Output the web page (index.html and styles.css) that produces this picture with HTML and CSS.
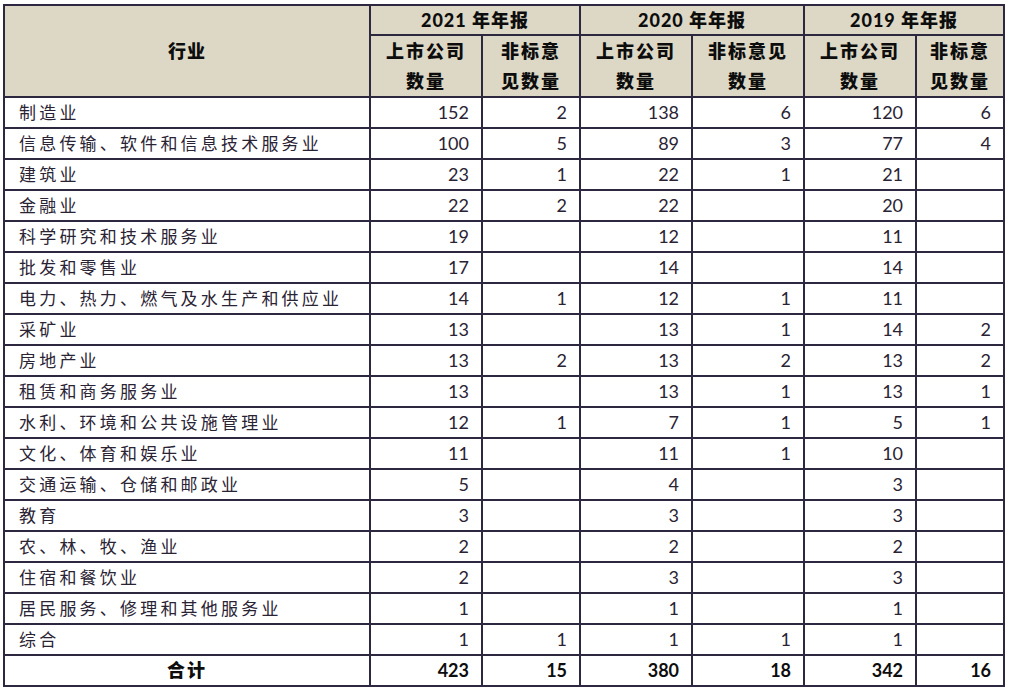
FILE: index.html
```html
<!DOCTYPE html>
<html lang="zh-CN">
<head>
<meta charset="utf-8">
<title>非标意见行业分布</title>
<link rel="stylesheet" href="styles.css">
</head>
<body>
<table class="report">
  <colgroup>
    <col class="c-ind"><col class="c-a"><col class="c-b"><col class="c-a"><col class="c-a"><col class="c-a"><col class="c-c">
  </colgroup>
  <thead>
    <tr class="h1">
      <th rowspan="2" class="ind-h">行业</th>
      <th colspan="2">2021 年年报</th>
      <th colspan="2">2020 年年报</th>
      <th colspan="2">2019 年年报</th>
    </tr>
    <tr class="h2">
      <th>上市公司<br>数量</th>
      <th>非标意<br>见数量</th>
      <th>上市公司<br>数量</th>
      <th>非标意见<br>数量</th>
      <th>上市公司<br>数量</th>
      <th>非标意<br>见数量</th>
    </tr>
  </thead>
  <tbody>
    <tr><td class="ind">制造业</td><td>152</td><td>2</td><td>138</td><td>6</td><td>120</td><td>6</td></tr>
    <tr><td class="ind">信息传输、软件和信息技术服务业</td><td>100</td><td>5</td><td>89</td><td>3</td><td>77</td><td>4</td></tr>
    <tr><td class="ind">建筑业</td><td>23</td><td>1</td><td>22</td><td>1</td><td>21</td><td></td></tr>
    <tr><td class="ind">金融业</td><td>22</td><td>2</td><td>22</td><td></td><td>20</td><td></td></tr>
    <tr><td class="ind">科学研究和技术服务业</td><td>19</td><td></td><td>12</td><td></td><td>11</td><td></td></tr>
    <tr><td class="ind">批发和零售业</td><td>17</td><td></td><td>14</td><td></td><td>14</td><td></td></tr>
    <tr><td class="ind">电力、热力、燃气及水生产和供应业</td><td>14</td><td>1</td><td>12</td><td>1</td><td>11</td><td></td></tr>
    <tr><td class="ind">采矿业</td><td>13</td><td></td><td>13</td><td>1</td><td>14</td><td>2</td></tr>
    <tr><td class="ind">房地产业</td><td>13</td><td>2</td><td>13</td><td>2</td><td>13</td><td>2</td></tr>
    <tr><td class="ind">租赁和商务服务业</td><td>13</td><td></td><td>13</td><td>1</td><td>13</td><td>1</td></tr>
    <tr><td class="ind">水利、环境和公共设施管理业</td><td>12</td><td>1</td><td>7</td><td>1</td><td>5</td><td>1</td></tr>
    <tr><td class="ind">文化、体育和娱乐业</td><td>11</td><td></td><td>11</td><td>1</td><td>10</td><td></td></tr>
    <tr><td class="ind">交通运输、仓储和邮政业</td><td>5</td><td></td><td>4</td><td></td><td>3</td><td></td></tr>
    <tr><td class="ind">教育</td><td>3</td><td></td><td>3</td><td></td><td>3</td><td></td></tr>
    <tr><td class="ind">农、林、牧、渔业</td><td>2</td><td></td><td>2</td><td></td><td>2</td><td></td></tr>
    <tr><td class="ind">住宿和餐饮业</td><td>2</td><td></td><td>3</td><td></td><td>3</td><td></td></tr>
    <tr><td class="ind">居民服务、修理和其他服务业</td><td>1</td><td></td><td>1</td><td></td><td>1</td><td></td></tr>
    <tr><td class="ind">综合</td><td>1</td><td>1</td><td>1</td><td>1</td><td>1</td><td></td></tr>
    <tr class="total"><td class="ind-total">合计</td><td>423</td><td>15</td><td>380</td><td>18</td><td>342</td><td>16</td></tr>
  </tbody>
</table>
</body>
</html>
```

FILE: styles.css
```css
html, body {
  margin: 0;
  padding: 0;
  background: #ffffff;
}

body {
  padding: 4px 0 0 3px;
  font-family: Lato, "Noto Sans CJK SC", sans-serif;
}

.report {
  border-collapse: collapse;
  table-layout: fixed;
  width: 1000px;
  color: #2a2334;
}

.c-ind { width: 366px; }
.c-a { width: 112px; }
.c-b { width: 98px; }
.c-c { width: 88px; }

.report th,
.report td {
  border: 2px solid #2e2740;
  padding: 0;
}

.report th {
  background: #ddd8c6;
  color: #0d0d0d;
  font-weight: 900;
  font-size: 18px;
  text-align: center;
  letter-spacing: 1px;
}

.h1 th {
  height: 28px;
  line-height: 28px;
}

.h2 th {
  height: 60px;
  line-height: 30px;
  letter-spacing: 2px;
}

.ind-h {
  letter-spacing: 2px;
}

.report td {
  height: 29px;
  line-height: 29px;
  font-size: 18px;
  text-align: right;
  padding-right: 12px;
}

.report td.ind {
  text-align: left;
  padding-left: 14px;
  padding-right: 0;
  letter-spacing: 3.2px;
  font-size: 17px;
  white-space: nowrap;
}

.total td {
  font-weight: 700;
  color: #0d0d0d;
}

.total td.ind-total {
  text-align: center;
  padding-right: 0;
  font-weight: 900;
  letter-spacing: 2px;
}
```
